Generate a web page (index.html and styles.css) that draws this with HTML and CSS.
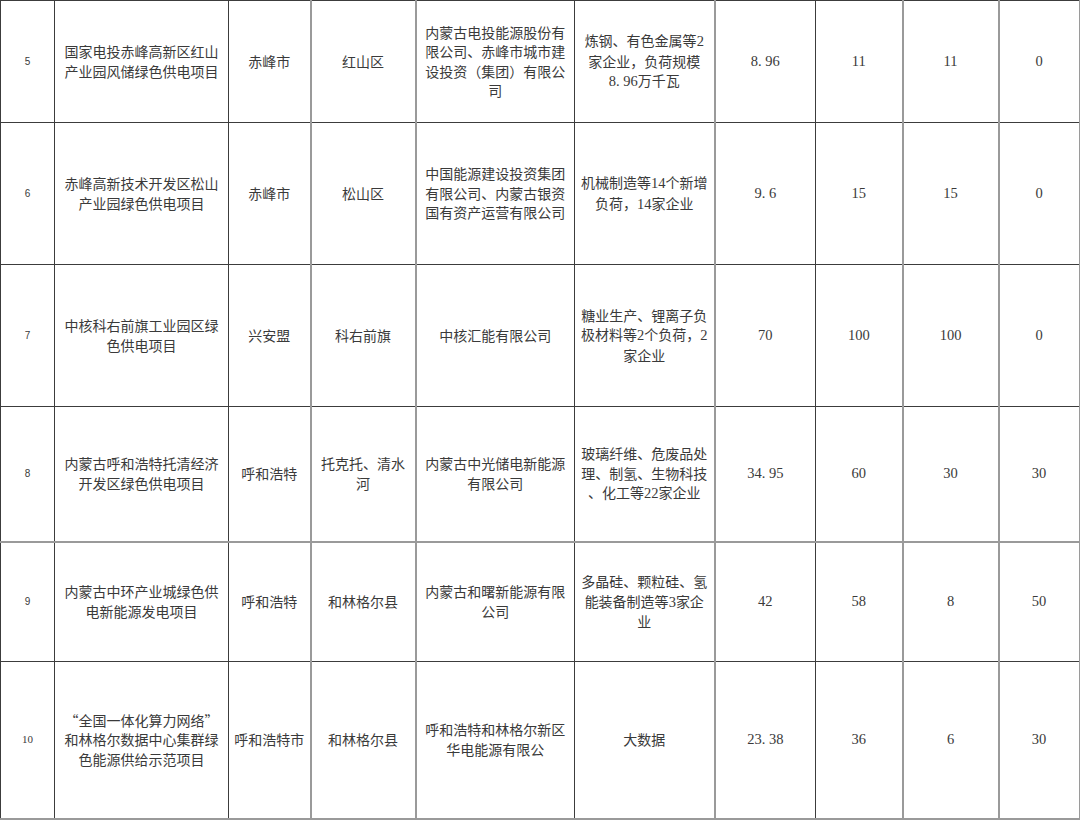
FILE: index.html
```html
<!DOCTYPE html>
<html lang="zh-CN">
<head>
<meta charset="utf-8">
<title>绿色供电项目</title>
<link rel="stylesheet" href="styles.css">
</head>
<body>
<table class="grid">
  <colgroup>
    <col class="c-no"><col class="c-name"><col class="c-city"><col class="c-area"><col class="c-owner"><col class="c-load"><col class="c-n1"><col class="c-n2"><col class="c-n3"><col class="c-n4">
  </colgroup>
  <tbody>
    <tr class="r5">
      <td class="no">5</td>
      <td class="zh">国家电投赤峰高新区红山<br>产业园风储绿色供电项目</td>
      <td class="zh">赤峰市</td>
      <td class="zh g">红山区</td>
      <td class="zh g">内蒙古电投能源股份有<br>限公司、赤峰市城市建<br>设投资（集团）有限公<br>司</td>
      <td class="zh">炼钢、有色金属等<span class="num">2</span><br>家企业，负荷规模<br><span class="num">8. 96</span>万千瓦</td>
      <td class="num g">8. 96</td>
      <td class="num">11</td>
      <td class="num g">11</td>
      <td class="num g gr">0</td>
    </tr>
    <tr class="r6">
      <td class="no">6</td>
      <td class="zh">赤峰高新技术开发区松山<br>产业园绿色供电项目</td>
      <td class="zh">赤峰市</td>
      <td class="zh g">松山区</td>
      <td class="zh g">中国能源建设投资集团<br>有限公司、内蒙古银资<br>国有资产运营有限公司</td>
      <td class="zh">机械制造等<span class="num">14</span>个新增<br>负荷，<span class="num">14</span>家企业</td>
      <td class="num g">9. 6</td>
      <td class="num">15</td>
      <td class="num g">15</td>
      <td class="num g gr">0</td>
    </tr>
    <tr class="r7">
      <td class="no">7</td>
      <td class="zh">中核科右前旗工业园区绿<br>色供电项目</td>
      <td class="zh">兴安盟</td>
      <td class="zh g">科右前旗</td>
      <td class="zh g">中核汇能有限公司</td>
      <td class="zh">糖业生产、锂离子负<br>极材料等<span class="num">2</span>个负荷，<span class="num">2</span><br>家企业</td>
      <td class="num g">70</td>
      <td class="num">100</td>
      <td class="num g">100</td>
      <td class="num g gr">0</td>
    </tr>
    <tr class="r8">
      <td class="no">8</td>
      <td class="zh">内蒙古呼和浩特托清经济<br>开发区绿色供电项目</td>
      <td class="zh">呼和浩特</td>
      <td class="zh g">托克托、清水<br>河</td>
      <td class="zh g">内蒙古中光储电新能源<br>有限公司</td>
      <td class="zh">玻璃纤维、危废品处<br>理、制氢、生物科技<br>、化工等<span class="num">22</span>家企业</td>
      <td class="num g">34. 95</td>
      <td class="num">60</td>
      <td class="num g">30</td>
      <td class="num g gr">30</td>
    </tr>
    <tr class="r9">
      <td class="no">9</td>
      <td class="zh">内蒙古中环产业城绿色供<br>电新能源发电项目</td>
      <td class="zh">呼和浩特</td>
      <td class="zh g">和林格尔县</td>
      <td class="zh g">内蒙古和曙新能源有限<br>公司</td>
      <td class="zh">多晶硅、颗粒硅、氢<br>能装备制造等<span class="num">3</span>家企<br>业</td>
      <td class="num g">42</td>
      <td class="num">58</td>
      <td class="num g">8</td>
      <td class="num g gr">50</td>
    </tr>
    <tr class="r10">
      <td class="no serif">10</td>
      <td class="zh">“全国一体化算力网络”<br>和林格尔数据中心集群绿<br>色能源供给示范项目</td>
      <td class="zh">呼和浩特市</td>
      <td class="zh g">和林格尔县</td>
      <td class="zh g">呼和浩特和林格尔新区<br>华电能源有限公</td>
      <td class="zh">大数据</td>
      <td class="num g">23. 38</td>
      <td class="num">36</td>
      <td class="num g">6</td>
      <td class="num g gr">30</td>
    </tr>
  </tbody>
</table>
</body>
</html>
```

FILE: styles.css
```css
html, body {
  margin: 0;
  padding: 0;
  background: #ffffff;
}

.grid {
  border-collapse: collapse;
  table-layout: fixed;
  width: 1079px;
  color: #3a3a3a;
  font-family: "Noto Sans CJK SC", "Liberation Serif", sans-serif;
}

.c-no { width: 54px; }
.c-name { width: 174px; }
.c-city { width: 82px; }
.c-area { width: 105px; }
.c-owner { width: 159px; }
.c-load { width: 140px; }
.c-n1 { width: 101px; }
.c-n2 { width: 87px; }
.c-n3 { width: 96px; }
.c-n4 { width: 81px; }

.grid td {
  border: 1px solid #3c3c3c;
  text-align: center;
  vertical-align: middle;
  padding: 0 2px;
  font-size: 14px;
  line-height: 19.5px;
  overflow: hidden;
  white-space: nowrap;
}

.grid td.g {
  border-left: 2px solid #9a9a9a;
}

.grid td.gr {
  border-right: 2px solid #9a9a9a;
}

.grid tr.r8 td,
.grid tr.r10 td {
  border-bottom: 2px solid #9a9a9a;
}

.r5 { height: 122px; }
.r6 { height: 142px; }
.r7 { height: 142px; }
.r8 { height: 135px; }
.r9 { height: 120px; }
.r10 { height: 157px; }

.grid td.no {
  font-family: "Liberation Sans", sans-serif;
  font-size: 10px;
}

.grid td.no.serif {
  font-family: "Liberation Serif", serif;
  font-size: 11px;
}

.num {
  font-family: "Liberation Serif", serif;
  font-size: 14.5px;
}

.grid td.num {
  font-size: 14.5px;
}
```
